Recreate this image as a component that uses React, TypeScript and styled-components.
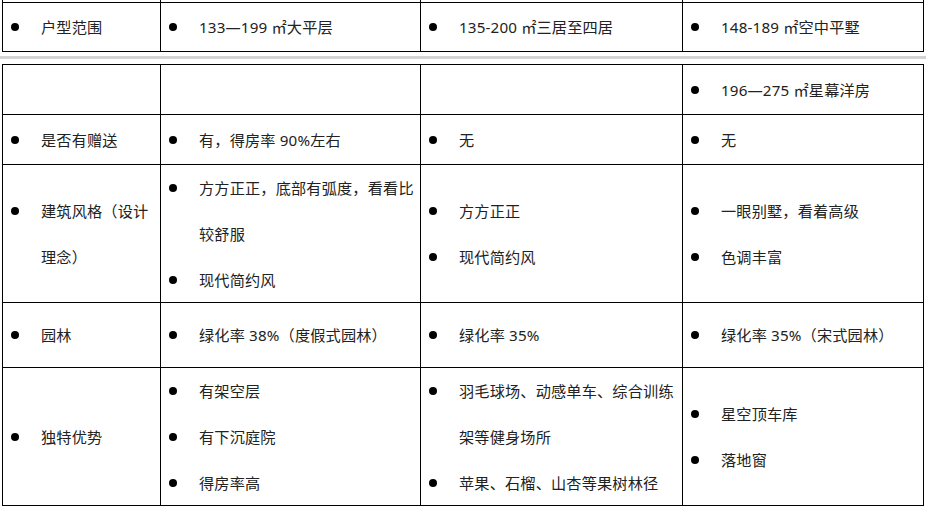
import React from "react";
import styled, { createGlobalStyle } from "styled-components";

const GlobalStyle = createGlobalStyle`
  html, body {
    margin: 0;
    padding: 0;
    background: #ffffff;
  }
  body {
    font-family: "Noto Sans", "Noto Sans CJK SC", sans-serif;
    font-size: 15.2px;
    color: #222222;
  }
`;

const Page = styled.div`
  display: flex;
  flex-direction: column;
  width: 926px;
  height: 509px;
  overflow: hidden;
  background: #ffffff;
`;

const Table = styled.div<{ $rows: string; $stub?: boolean }>`
  display: grid;
  grid-template-columns: 157px 259px 261px 240px;
  grid-template-rows: ${(p) => p.$rows};
  gap: 1px;
  background: #000000;
  padding: ${(p) => (p.$stub ? "0 1px 1px 1px" : "1px")};
  margin-left: 2px;
  width: fit-content;
`;

const Cell = styled.div`
  background: #ffffff;
  display: flex;
  flex-direction: column;
  justify-content: center;
  padding-right: 5px;
  min-width: 0;
`;

const Item = styled.div`
  display: flex;
  align-items: flex-start;
  line-height: 46px;
`;

const Bullet = styled.span`
  flex: none;
  width: 38px;
  height: 46px;
  box-sizing: border-box;
  padding-left: 8px;
  display: flex;
  align-items: center;
  &::before {
    content: "";
    display: block;
    width: 8px;
    height: 8px;
    border-radius: 50%;
    background: #000000;
  }
`;

const Text = styled.span`
  flex: 1;
  min-width: 0;
  letter-spacing: 0.15px;
`;

const Separator = styled.div`
  height: 3px;
  background: #d3d3d3;
  margin: 4px 0 5px 0;
`;

const List = ({ items }: { items: string[] }) => (
  <>
    {items.map((t, i) => (
      <Item key={i}>
        <Bullet />
        <Text>{t}</Text>
      </Item>
    ))}
  </>
);

type Row = string[][];

const topRows: Row[] = [
  [["户型范围"], ["133—199 ㎡大平层"], ["135-200 ㎡三居至四居"], ["148-189 ㎡空中平墅"]],
];

const mainRows: Row[] = [
  [[], [], [], ["196—275 ㎡星幕洋房"]],
  [["是否有赠送"], ["有，得房率 90%左右"], ["无"], ["无"]],
  [
    ["建筑风格（设计理念）"],
    ["方方正正，底部有弧度，看看比较舒服", "现代简约风"],
    ["方方正正", "现代简约风"],
    ["一眼别墅，看着高级", "色调丰富"],
  ],
  [["园林"], ["绿化率 38%（度假式园林）"], ["绿化率 35%"], ["绿化率 35%（宋式园林）"]],
  [
    ["独特优势"],
    ["有架空层", "有下沉庭院", "得房率高"],
    ["羽毛球场、动感单车、综合训练架等健身场所", "苹果、石榴、山杏等果树林径"],
    ["星空顶车库", "落地窗"],
  ],
];

export default function App() {
  return (
    <Page>
      <GlobalStyle />
      <Table $rows="2px 48px" $stub>
        {[0, 1, 2, 3].map((i) => (
          <Cell key={`stub-${i}`} />
        ))}
        {topRows.map((row, r) =>
          row.map((items, c) => (
            <Cell key={`t-${r}-${c}`}>
              <List items={items} />
            </Cell>
          ))
        )}
      </Table>
      <Separator />
      <Table $rows="49px 49px 137px 64px 137px">
        {mainRows.map((row, r) =>
          row.map((items, c) => (
            <Cell key={`m-${r}-${c}`}>
              <List items={items} />
            </Cell>
          ))
        )}
      </Table>
    </Page>
  );
}
